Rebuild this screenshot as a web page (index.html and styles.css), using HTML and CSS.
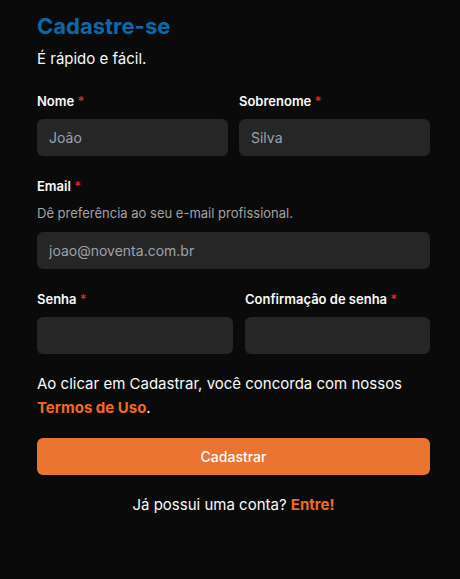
FILE: index.html
```html
<!DOCTYPE html>
<html lang="pt-BR">
<head>
    <meta charset="UTF-8">
    <meta name="viewport" content="width=device-width, initial-scale=1.0">
    <title>Cadastre-se</title>
    <link rel="stylesheet" href="styles.css">
</head>
<body>
    <div class="Cadastro">
        <h1>Cadastre-se</h1>
        <p class="sub">É rápido e fácil.</p>

        <form>
            <div class="row nomes">
                <div class="field">
                    <label for="Nome">Nome <span class="req">*</span></label>
                    <input type="text" id="Nome" placeholder="João">
                </div>
                <div class="field">
                    <label for="Sobrenome">Sobrenome <span class="req">*</span></label>
                    <input type="text" id="Sobrenome" placeholder="Silva">
                </div>
            </div>

            <div class="field email">
                <label for="Email">Email <span class="req">*</span></label>
                <div class="help">Dê preferência ao seu e-mail profissional.</div>
                <input type="email" id="Email" placeholder="joao@noventa.com.br">
            </div>

            <div class="row senhas">
                <div class="field">
                    <label for="Senha">Senha <span class="req">*</span></label>
                    <input type="password" id="Senha">
                </div>
                <div class="field">
                    <label for="Confirma">Confirmação de senha <span class="req">*</span></label>
                    <input type="password" id="Confirma">
                </div>
            </div>

            <p class="termos">Ao clicar em Cadastrar, você concorda com nossos <a href="#">Termos de Uso</a>.</p>

            <button type="button" id="cadastrar">Cadastrar</button>
        </form>

        <p class="entrar">Já possui uma conta? <a href="#">Entre!</a></p>
    </div>
</body>
</html>
```

FILE: styles.css
```css
body {
    margin: 0;
    background-color: #0a0a0a;
    color: #fafafa;
    font-family: Inter, "Noto Sans", sans-serif;
}
.Cadastro {
    width: 393px;
    padding: 11px 0 0 37px;
}
h1 {
    margin: 0;
    font-size: 22px;
    font-weight: 700;
    line-height: 30px;
    color: #0b69a8;
}
.sub {
    margin: 6px 0 0 0;
    font-size: 15px;
    line-height: 24px;
}
form {
    margin-top: 21px;
}
.row {
    display: grid;
    margin-bottom: 21px;
}
.nomes {
    grid-template-columns: 1fr 1fr;
    gap: 11px;
}
.senhas {
    grid-template-columns: 196fr 185fr;
    gap: 12px;
    margin-bottom: 0;
}
.field {
    display: flex;
    flex-direction: column;
}
.email {
    margin-bottom: 21px;
}
label {
    font-size: 13px;
    font-weight: 600;
    line-height: 18px;
    margin-bottom: 9px;
}
.req {
    color: #dc2626;
}
.help {
    font-size: 13px;
    line-height: 18px;
    color: #a3a3a3;
    margin: 0 0 10px 0;
}
input {
    box-sizing: border-box;
    height: 37px;
    width: 100%;
    border: none;
    border-radius: 6px;
    background-color: #262626;
    color: #e5e5e5;
    padding: 0 12px;
    font-family: inherit;
    font-size: 14px;
    outline: none;
}
input::placeholder {
    color: #9ca3af;
}
.termos {
    margin: 18px 0 0 0;
    font-size: 15px;
    line-height: 24px;
}
a {
    color: #f06a24;
    font-weight: 700;
    text-decoration: none;
}
button {
    display: block;
    width: 100%;
    height: 37px;
    margin-top: 18px;
    border: none;
    border-radius: 6px;
    background-color: #ea7530;
    color: white;
    font-family: inherit;
    font-size: 14px;
    font-weight: 500;
    cursor: pointer;
}
.entrar {
    margin: 18px 0 0 0;
    text-align: center;
    font-size: 15px;
    line-height: 24px;
}
```
